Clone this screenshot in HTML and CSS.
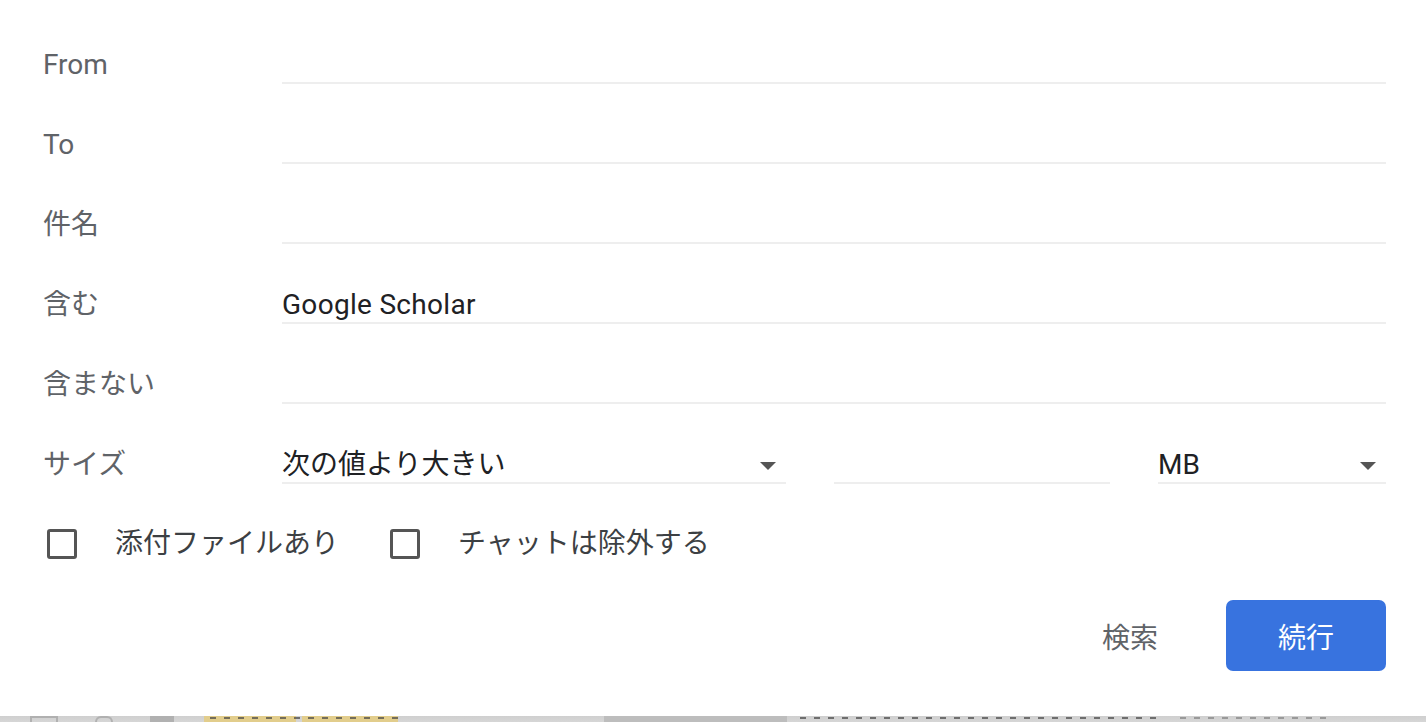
FILE: index.html
```html
<!DOCTYPE html>
<html lang="ja">
<head>
<meta charset="utf-8">
<title>検索オプション</title>
<link rel="stylesheet" href="styles.css">
</head>
<body>
<div class="page">
  <form class="search-form">
    <div class="row">
      <label class="label">From</label>
      <div class="field"></div>
    </div>
    <div class="row">
      <label class="label">To</label>
      <div class="field"></div>
    </div>
    <div class="row">
      <label class="label">件名</label>
      <div class="field"></div>
    </div>
    <div class="row">
      <label class="label">含む</label>
      <div class="field text-value">Google Scholar</div>
    </div>
    <div class="row">
      <label class="label">含まない</label>
      <div class="field"></div>
    </div>
    <div class="row">
      <label class="label">サイズ</label>
      <div class="size-group">
        <div class="field select size-op">
          <span>次の値より大きい</span>
          <span class="caret"></span>
        </div>
        <div class="field size-num"></div>
        <div class="field select size-unit">
          <span>MB</span>
          <span class="caret"></span>
        </div>
      </div>
    </div>

    <div class="checks">
      <div class="check">
        <span class="box"></span>
        <span class="check-text">添付ファイルあり</span>
      </div>
      <div class="check">
        <span class="box"></span>
        <span class="check-text">チャットは除外する</span>
      </div>
    </div>

    <div class="actions">
      <button type="button" class="btn-text">検索</button>
      <button type="button" class="btn-primary">続行</button>
    </div>
  </form>

  <div class="under-list">
    <span class="ic ic-1"></span>
    <span class="ic ic-2"></span>
    <span class="ic ic-3"></span>
    <span class="hl hl-1"></span>
    <span class="hl hl-2"></span>
    <span class="dots d-1"></span>
    <span class="grey-block"></span>
    <span class="dots d-2"></span>
    <span class="dots d-3"></span>
  </div>
</div>
</body>
</html>
```

FILE: styles.css
```css
* {
  box-sizing: border-box;
}

html, body {
  margin: 0;
  padding: 0;
  background: #ffffff;
}

body {
  font-family: Roboto, "Noto Sans CJK JP", "Noto Sans", sans-serif;
  font-size: 28px;
  color: #202124;
}

.page {
  height: 100vh;
  display: flex;
  flex-direction: column;
}

.search-form {
  padding: 4px 40px 0 43px;
}

.row {
  display: flex;
  align-items: flex-end;
  height: 80px;
}

.label {
  width: 239px;
  flex: none;
  line-height: 32px;
  padding-bottom: 3px;
  color: #5f6368;
}

.field {
  flex: 1;
  height: 35px;
  line-height: 32px;
  padding-bottom: 1px;
  border-bottom: 2px solid #eeeeee;
  color: #202124;
  white-space: nowrap;
}

.text-value {
  letter-spacing: 0.3px;
}

.size-group {
  flex: 1;
  display: flex;
  gap: 48px;
}

.size-op {
  flex: 0 0 504px;
}

.size-num {
  flex: 0 0 276px;
}

.size-unit {
  flex: 1;
}

.select {
  display: flex;
  align-items: center;
  justify-content: space-between;
  padding-right: 10px;
}

.caret {
  width: 0;
  height: 0;
  border-left: 8px solid transparent;
  border-right: 8px solid transparent;
  border-top: 8px solid #555555;
  margin-top: 2px;
}

.checks {
  display: flex;
  align-items: center;
  margin-top: 44px;
  height: 32px;
}

.check {
  display: flex;
  align-items: center;
  padding-left: 4px;
}

.check + .check {
  margin-left: 47px;
}

.box {
  width: 30px;
  height: 30px;
  border: 3px solid #555555;
  border-radius: 3px;
  flex: none;
}

.check-text {
  margin-left: 38px;
  color: #3c4043;
  line-height: 32px;
}

.actions {
  display: flex;
  justify-content: flex-end;
  align-items: center;
  gap: 44px;
  margin-top: 40px;
}

.btn-text,
.btn-primary {
  font: inherit;
  border: none;
  cursor: pointer;
  height: 71px;
}

.btn-text {
  background: transparent;
  color: #5f6368;
  padding: 0 24px;
}

.btn-primary {
  width: 160px;
  background: #3873df;
  color: #ffffff;
  border-radius: 7px;
}

/* the message list peeking out below the dialog */
.under-list {
  margin-top: auto;
  height: 6px;
  position: relative;
  background: linear-gradient(#cfcfcf, #d6d6d6);
  overflow: hidden;
}

.under-list span {
  position: absolute;
  top: 0;
  height: 6px;
}

.ic {
  border: 2px solid #a9a9a9;
  border-bottom: none;
  opacity: 0.8;
}

.ic-1 { left: 30px; width: 28px; top: 2px; }
.ic-2 { left: 95px; width: 18px; border-radius: 6px 6px 0 0; top: 2px; }
.ic-3 { left: 150px; width: 24px; background: #a9a9a9; top: 2px; }

.hl {
  background: #e2cd8c;
}

.hl-1 { left: 204px; width: 92px; }
.hl-2 { left: 302px; width: 96px; }

.grey-block {
  left: 604px;
  width: 183px;
  background: #bdbdbd;
}

.dots {
  top: 1px !important;
  height: 2px !important;
  background: repeating-linear-gradient(90deg, #444 0 6px, transparent 6px 14px);
  opacity: 0.7;
}

.d-1 { left: 210px; width: 190px; }
.d-2 { left: 800px; width: 360px; }
.d-3 { left: 1180px; width: 150px; opacity: 0.4; }
```
